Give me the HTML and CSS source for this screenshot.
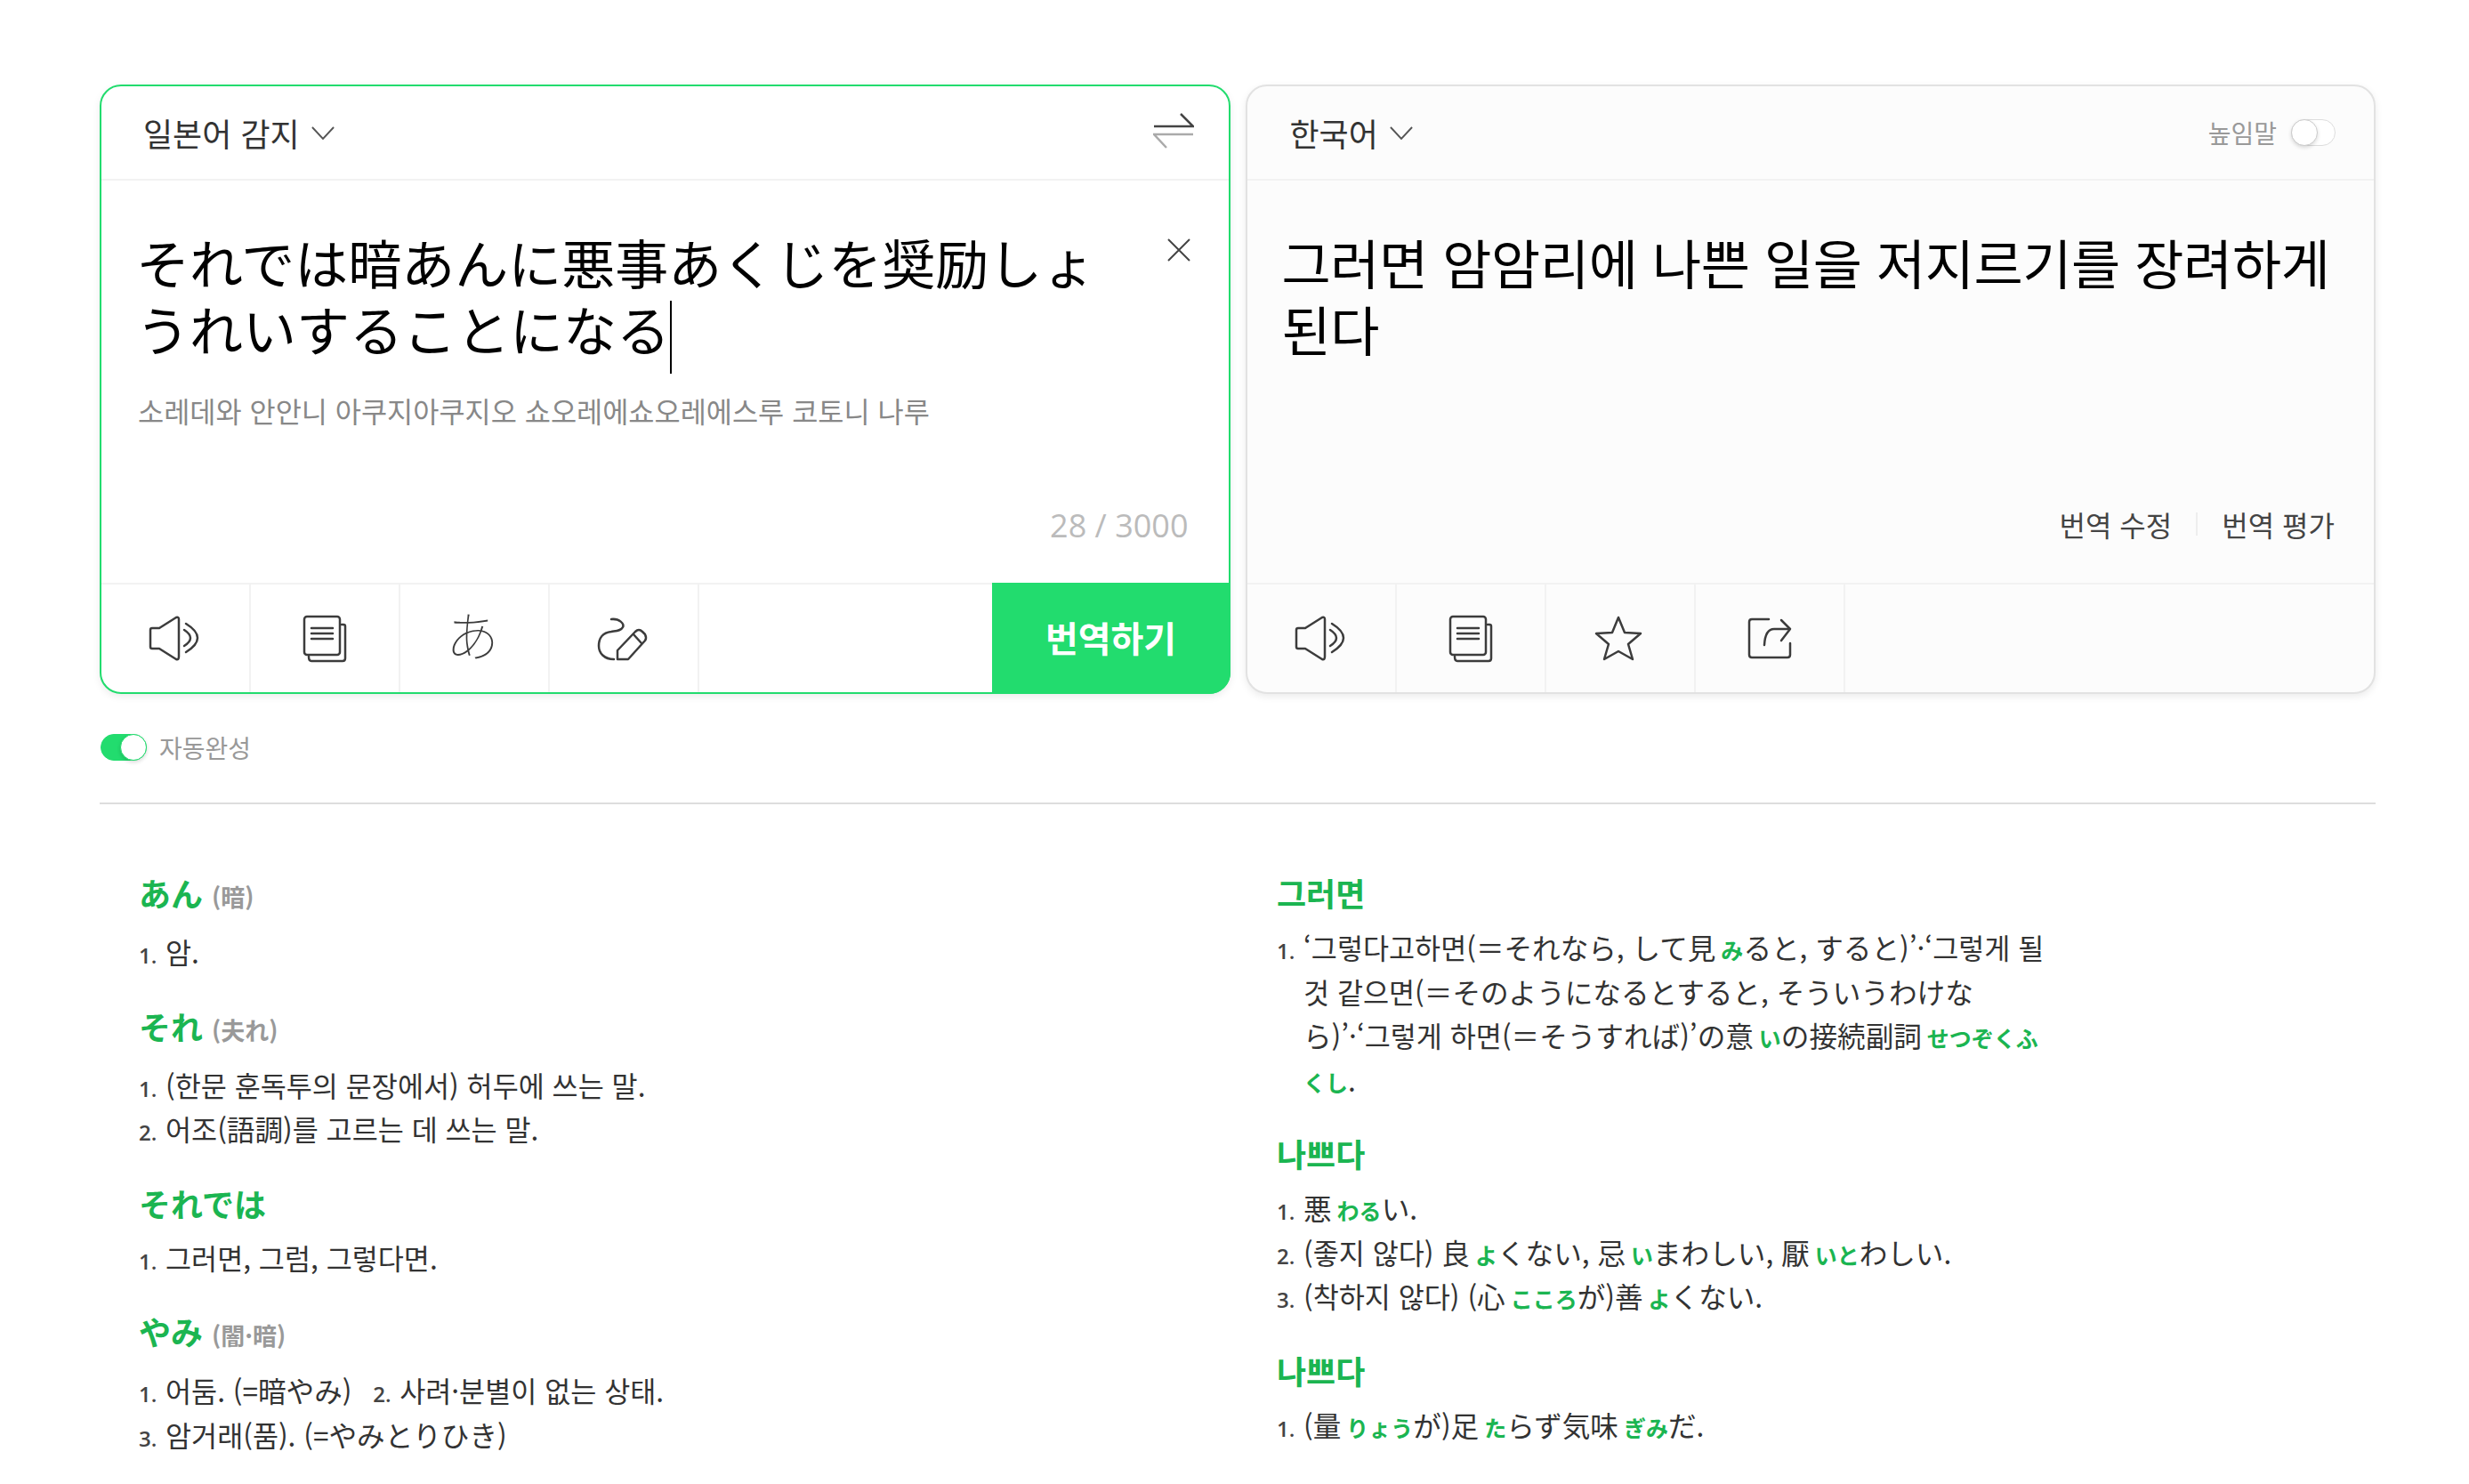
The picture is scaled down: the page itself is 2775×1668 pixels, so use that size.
FILE: index.html

```html
<!DOCTYPE html>
<html lang="ko">
<head>
    <meta charset="UTF-8">
    <title>번역</title>
    <link rel="stylesheet" href="styles.css">
</head>
<body>

<div class="page">

    <!-- 번역 패널 -->
    <div class="panels">
        <div class="panel source">
            <div class="panel-head">
                <span class="lang">일본어 감지</span>
                <svg class="chevron" viewBox="0 0 28 16"><path d="M1 1 L14 15 L27 1"/></svg>
                <svg class="swap" viewBox="0 0 46 40"><path class="dark" d="M1 15 H45 L31 1"/><path class="light" d="M45 24 H1 L15 39"/></svg>
            </div>
            <div class="panel-body">
                <svg class="clear" viewBox="0 0 26 26"><path d="M1 1 L25 25 M25 1 L1 25"/></svg>
                <div class="big-text ja">それでは暗あんに悪事あくじを奨励しょうれいすることになる<span class="caret"></span></div>
                <div class="ghost">소레데와 안안니 아쿠지아쿠지오 쇼오레에쇼오레에스루 코토니 나루</div>
                <div class="counter">28 / 3000</div>
            </div>
            <div class="toolbar">
                <div class="tool"><svg class="ico speaker" viewBox="0 0 60 52"><path d="M3 16 Q3 14 5 14 H13 L32 2 Q35 1 35 4 V46 Q35 50 32 49 L13 37 H5 Q3 37 3 35 Z"/><path d="M41 16 Q55 25 41 34"/><path d="M43 9 Q69 25 43 41"/></svg></div>
                <div class="tool"><svg class="ico doc" viewBox="0 0 50 54"><rect x="2" y="2" width="40" height="43" rx="3"/><path d="M44 11 H46 Q48 11 48 13 V49 Q48 52 45 52 H10 Q7 52 7 47"/><path d="M10 15 H34 M10 21 H34 M10 27 H34"/></svg></div>
                <div class="tool"><span class="kana-ico ja">あ</span></div>
                <div class="tool"><svg class="ico hand" viewBox="0 0 60 52"><path d="M16 4 C25 3 31 9 29 13 C27 17 22 17 16 18 C6 19 2 26 2 34 C2 42 8 49 19 49"/><path d="M23 49 V39 L43 18 Q47 14 51 18 L54 21 Q56 25 54 28 L35 49 Z"/><path d="M41 21 L50 31"/></svg></div>
                <button class="translate-btn">번역하기</button>
            </div>
        </div>

        <div class="panel target">
            <div class="panel-head">
                <span class="lang">한국어</span>
                <svg class="chevron" viewBox="0 0 28 16"><path d="M1 1 L14 15 L27 1"/></svg>
                <span class="honorific">높임말</span>
                <span class="switch"><span class="knob"></span></span>
            </div>
            <div class="panel-body">
                <div class="big-text">그러면 암암리에 나쁜 일을 저지르기를 장려하게 된다</div>
                <div class="edit-links">
                    <span>번역 수정</span>
                    <span class="sep"></span>
                    <span>번역 평가</span>
                </div>
            </div>
            <div class="toolbar">
                <div class="tool"><svg class="ico speaker" viewBox="0 0 60 52"><path d="M3 16 Q3 14 5 14 H13 L32 2 Q35 1 35 4 V46 Q35 50 32 49 L13 37 H5 Q3 37 3 35 Z"/><path d="M41 16 Q55 25 41 34"/><path d="M43 9 Q69 25 43 41"/></svg></div>
                <div class="tool"><svg class="ico doc" viewBox="0 0 50 54"><rect x="2" y="2" width="40" height="43" rx="3"/><path d="M44 11 H46 Q48 11 48 13 V49 Q48 52 45 52 H10 Q7 52 7 47"/><path d="M10 15 H34 M10 21 H34 M10 27 H34"/></svg></div>
                <div class="tool"><svg class="ico star" viewBox="0 0 56 54"><path d="M28 3 L35 20 L53 21 L39 33 L44 50 L28 41 L12 50 L17 33 L3 21 L21 20 Z"/></svg></div>
                <div class="tool"><svg class="ico share" viewBox="0 0 50 50"><path d="M24 3 H5 Q2 3 2 6 V43 Q2 46 5 46 H45 Q48 46 48 43 V30"/><path d="M38 4 L48 14 L38 27"/><path d="M47 14 H30 Q20 14 19 32"/></svg></div>
            </div>
        </div>
    </div>

    <!-- 자동완성 -->
    <div class="auto-row">
        <span class="switch on"><span class="knob"></span></span>
        <span class="auto-label">자동완성</span>
    </div>

    <!-- 사전 -->
    <div class="dict">
        <div class="dict-col">
            <div class="entry">
                <h3 class="ja">あん <small>(暗)</small></h3>
                <p><b>1.</b>암.</p>
            </div>
            <div class="entry">
                <h3 class="ja">それ <small>(夫れ)</small></h3>
                <p><b>1.</b>(한문 훈독투의 문장에서) 허두에 쓰는 말.</p>
                <p><b>2.</b>어조(語調)를 고르는 데 쓰는 말.</p>
            </div>
            <div class="entry">
                <h3 class="ja">それでは</h3>
                <p><b>1.</b>그러면, 그럼, 그렇다면.</p>
            </div>
            <div class="entry">
                <h3 class="ja">やみ <small>(闇·暗)</small></h3>
                <p><b>1.</b>어둠. (=暗やみ) &nbsp;<b class="next">2.</b>사려·분별이 없는 상태.</p>
                <p><b>3.</b>암거래(품). (=やみとりひき)</p>
            </div>
        </div>
        <div class="dict-col">
            <div class="entry">
                <h3>그러면</h3>
                <p><b>1.</b>‘그렇다고하면(＝それなら, して見<i>み</i>ると, すると)’·‘그렇게 될 것 같으면(＝そのようになるとすると, そういうわけなら)’·‘그렇게 하면(＝そうすれば)’の意<i>い</i>の接続副詞<i>せつぞくふくし</i>.</p>
            </div>
            <div class="entry">
                <h3>나쁘다</h3>
                <p><b>1.</b>悪<i>わる</i>い.</p>
                <p><b>2.</b>(좋지 않다) 良<i>よ</i>くない, 忌<i>い</i>まわしい, 厭<i>いと</i>わしい.</p>
                <p><b>3.</b>(착하지 않다) (心<i>こころ</i>が)善<i>よ</i>くない.</p>
            </div>
            <div class="entry">
                <h3>나쁘다</h3>
                <p><b>1.</b>(量<i>りょう</i>が)足<i>た</i>らず気味<i>ぎみ</i>だ.</p>
            </div>
        </div>
    </div>

</div>

</body>
</html>
```

FILE: styles.css

```css
html, body {
    margin: 0;
    padding: 0;
    background-color: #fff;
    overflow: hidden;
}

body {
    font-family: "Noto Sans CJK KR", "Noto Sans", sans-serif;
    color: #333;
    height: 1668px;
}

.ja {
    font-family: "Noto Sans CJK JP", "Noto Sans", sans-serif;
}

.page {
    padding: 95px 105px 0 112px;
}

.panels {
    display: grid;
    grid-template-columns: 1fr 1fr;
    gap: 17px;
}

.panel {
    height: 685px;
    box-sizing: border-box;
    display: flex;
    flex-direction: column;
    border-radius: 24px;
    border: 2px solid #e2e2e2;
    background-color: #fcfcfc;
    box-shadow: 0 3px 8px rgba(0, 0, 0, 0.08);
}

.panel.source {
    border-color: #22dc6e;
    background-color: #fff;
}

.panel-head {
    height: 104px;
    flex: none;
    display: flex;
    align-items: center;
    padding: 0 47px;
    border-bottom: 2px solid #f2f2f2;
}

.target .panel-head {
    padding-left: 48px;
}

.lang {
    font-size: 36px;
    color: #333;
}

.chevron {
    width: 26px;
    height: 15px;
    margin-left: 13px;
    fill: none;
    stroke: #555;
    stroke-width: 2;
}

.swap {
    width: 46px;
    height: 40px;
    margin-left: auto;
    margin-right: -8px;
    margin-top: -4px;
    fill: none;
    stroke-width: 2.5;
}

.swap .dark {
    stroke: #444;
}

.swap .light {
    stroke: #aaa;
}

.honorific {
    margin-left: auto;
    font-size: 28px;
    color: #999;
}

.switch {
    display: block;
    position: relative;
    width: 50px;
    height: 30px;
    box-sizing: border-box;
    margin-left: 16px;
    margin-right: -4px;
    border: 1px solid #ddd;
    border-radius: 15px;
    background-color: #fff;
}

.knob {
    position: absolute;
    left: -1px;
    top: -1px;
    width: 30px;
    height: 30px;
    box-sizing: border-box;
    border: 1px solid #ccc;
    border-radius: 50%;
    background-color: #fff;
    box-shadow: 0 2px 4px rgba(0, 0, 0, 0.15);
}

.switch.on {
    width: 52px;
    margin: 0 0 0 1px;
    background-color: #22dc6e;
    border-color: #22dc6e;
}

.switch.on .knob {
    left: 21px;
    border-color: #22dc6e;
}

.panel-body {
    flex: 1;
    display: flex;
    flex-direction: column;
    position: relative;
    padding: 53px 44px 44px 39px;
    min-height: 0;
}

.source .panel-body {
    padding-right: 100px;
}

.target .panel-body {
    padding-right: 20px;
}

.clear {
    position: absolute;
    right: 43px;
    top: 65px;
    width: 26px;
    height: 26px;
    fill: none;
    stroke: #444;
    stroke-width: 2;
}

.big-text {
    font-size: 60px;
    line-height: 75px;
    color: #000;
}

.target .big-text {
    letter-spacing: -0.4px;
}

.caret {
    display: inline-block;
    width: 2px;
    height: 82px;
    margin: -10px 0;
    background-color: #000;
    vertical-align: middle;
}

.ghost {
    margin-top: 31px;
    margin-left: 2px;
    font-size: 31.7px;
    line-height: 40px;
    color: #888;
}

.counter {
    margin-top: auto;
    margin-right: -55px;
    text-align: right;
    font-family: "Open Sans", sans-serif;
    font-size: 36px;
    line-height: 40px;
    color: #bbb;
}

.edit-links {
    margin-top: auto;
    margin-right: 24px;
    margin-bottom: 2px;
    display: flex;
    justify-content: flex-end;
    align-items: center;
    font-size: 32px;
    line-height: 40px;
    color: #444;
}

.sep {
    width: 2px;
    height: 26px;
    margin: 0 27px;
    background-color: #eee;
}

.toolbar {
    height: 121px;
    flex: none;
    display: flex;
    border-top: 2px solid #f2f2f2;
}

.tool {
    width: 166px;
    border-right: 2px solid #f2f2f2;
    display: flex;
    align-items: center;
    justify-content: center;
}

.ico {
    fill: none;
    stroke: #3c3c3c;
    stroke-width: 2.5;
    stroke-linejoin: round;
    stroke-linecap: round;
}

.speaker { width: 60px; height: 52px; margin-left: -2px; }
.doc { width: 50px; height: 54px; }
.hand { width: 60px; height: 52px; }
.star { width: 56px; height: 54px; margin-left: -4px; }
.share { width: 50px; height: 50px; }

.kana-ico {
    font-size: 60px;
    line-height: 60px;
    font-weight: 100;
    margin: -12px 4px 0 0;
    color: #3c3c3c;
}

.translate-btn {
    margin: -2px -2px -2px auto;
    padding: 0 0 4px 0;
    width: 268px;
    border: none;
    border-radius: 0 0 24px 0;
    background-color: #22dc6e;
    color: #fff;
    font-family: inherit;
    font-size: 40px;
    font-weight: 700;
}

.auto-row {
    display: flex;
    align-items: center;
    margin-top: 45px;
    height: 30px;
}

.auto-label {
    margin-left: 14px;
    font-size: 28px;
    color: #999;
}

.dict {
    margin-top: 47px;
    border-top: 2px solid #ddd;
    padding-top: 74px;
    display: grid;
    grid-template-columns: 1fr 1fr;
}

.dict-col {
    padding-left: 44px;
}

.entry {
    margin-bottom: 33px;
    max-width: 866px;
}

.entry h3 {
    margin: 0 0 12px 0;
    font-size: 36px;
    line-height: 50px;
    font-weight: 700;
    color: #1bb551;
}

.entry h3 small {
    font-size: 27px;
    color: #999;
}

.entry p {
    margin: 0;
    font-size: 31.6px;
    line-height: 49.5px;
    color: #333;
    padding-left: 30px;
    text-indent: -30px;
}

.entry b {
    display: inline-block;
    width: 30px;
    line-height: 1;
    text-indent: 0;
    font-family: "Open Sans", sans-serif;
    font-size: 24px;
    font-weight: 600;
    color: #444;
}

.entry b.next {
    margin-left: 6px;
}

.entry i {
    font-style: normal;
    font-weight: 700;
    font-size: 25px;
    line-height: 1;
    margin-left: 6px;
    color: #1bb551;
}
```
